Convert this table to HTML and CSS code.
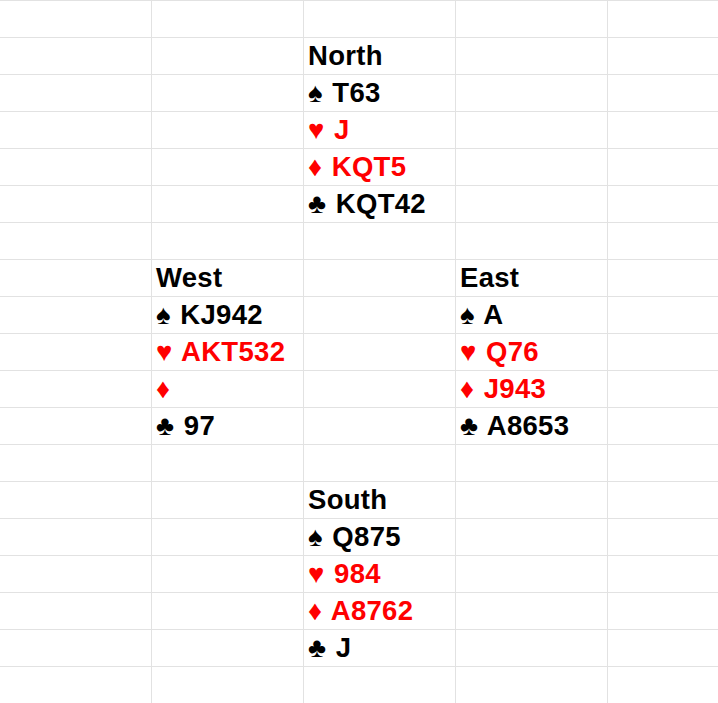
FILE: index.html
```html
<!DOCTYPE html>
<html>
<head>
<meta charset="utf-8">
<link rel="stylesheet" href="styles.css">
</head>
<body>
<div class="sheet">
  <div class="c"></div><div class="c"></div><div class="c"></div><div class="c"></div><div class="c"></div>
  <div class="c"></div><div class="c"></div><div class="c">North</div><div class="c"></div><div class="c"></div>
  <div class="c"></div><div class="c"></div><div class="c">♠ T63</div><div class="c"></div><div class="c"></div>
  <div class="c"></div><div class="c"></div><div class="c red">♥ J</div><div class="c"></div><div class="c"></div>
  <div class="c"></div><div class="c"></div><div class="c red">♦ KQT5</div><div class="c"></div><div class="c"></div>
  <div class="c"></div><div class="c"></div><div class="c">♣ KQT42</div><div class="c"></div><div class="c"></div>
  <div class="c"></div><div class="c"></div><div class="c"></div><div class="c"></div><div class="c"></div>
  <div class="c"></div><div class="c">West</div><div class="c"></div><div class="c">East</div><div class="c"></div>
  <div class="c"></div><div class="c">♠ KJ942</div><div class="c"></div><div class="c">♠ A</div><div class="c"></div>
  <div class="c"></div><div class="c red">♥ AKT532</div><div class="c"></div><div class="c red">♥ Q76</div><div class="c"></div>
  <div class="c"></div><div class="c red">♦</div><div class="c"></div><div class="c red">♦ J943</div><div class="c"></div>
  <div class="c"></div><div class="c">♣ 97</div><div class="c"></div><div class="c">♣ A8653</div><div class="c"></div>
  <div class="c"></div><div class="c"></div><div class="c"></div><div class="c"></div><div class="c"></div>
  <div class="c"></div><div class="c"></div><div class="c">South</div><div class="c"></div><div class="c"></div>
  <div class="c"></div><div class="c"></div><div class="c">♠ Q875</div><div class="c"></div><div class="c"></div>
  <div class="c"></div><div class="c"></div><div class="c red">♥ 984</div><div class="c"></div><div class="c"></div>
  <div class="c"></div><div class="c"></div><div class="c red">♦ A8762</div><div class="c"></div><div class="c"></div>
  <div class="c"></div><div class="c"></div><div class="c">♣ J</div><div class="c"></div><div class="c"></div>
  <div class="c"></div><div class="c"></div><div class="c"></div><div class="c"></div><div class="c"></div>
</div>
</body>
</html>
```
FILE: styles.css
```css
html, body {
  margin: 0;
  padding: 0;
  background: #ffffff;
  overflow: hidden;
}
body {
  width: 718px;
  height: 703px;
}
.sheet {
  display: grid;
  grid-template-columns: 152px 152px 152px 152px 110px;
  grid-auto-rows: 37px;
  border-top: 1px solid #e2e2e2;
  width: 718px;
  font-family: "Liberation Sans", Arial, sans-serif;
  font-weight: bold;
  font-size: 27.5px;
  letter-spacing: 0.3px;
  word-spacing: 1.5px;
  color: #000000;
}
.c {
  box-sizing: border-box;
  border-right: 1px solid #e2e2e2;
  border-bottom: 1px solid #e2e2e2;
  padding-left: 4px;
  line-height: 36px;
  white-space: nowrap;
}
.c:nth-child(5n) {
  border-right: none;
}
.red {
  color: #ff0000;
}
```
